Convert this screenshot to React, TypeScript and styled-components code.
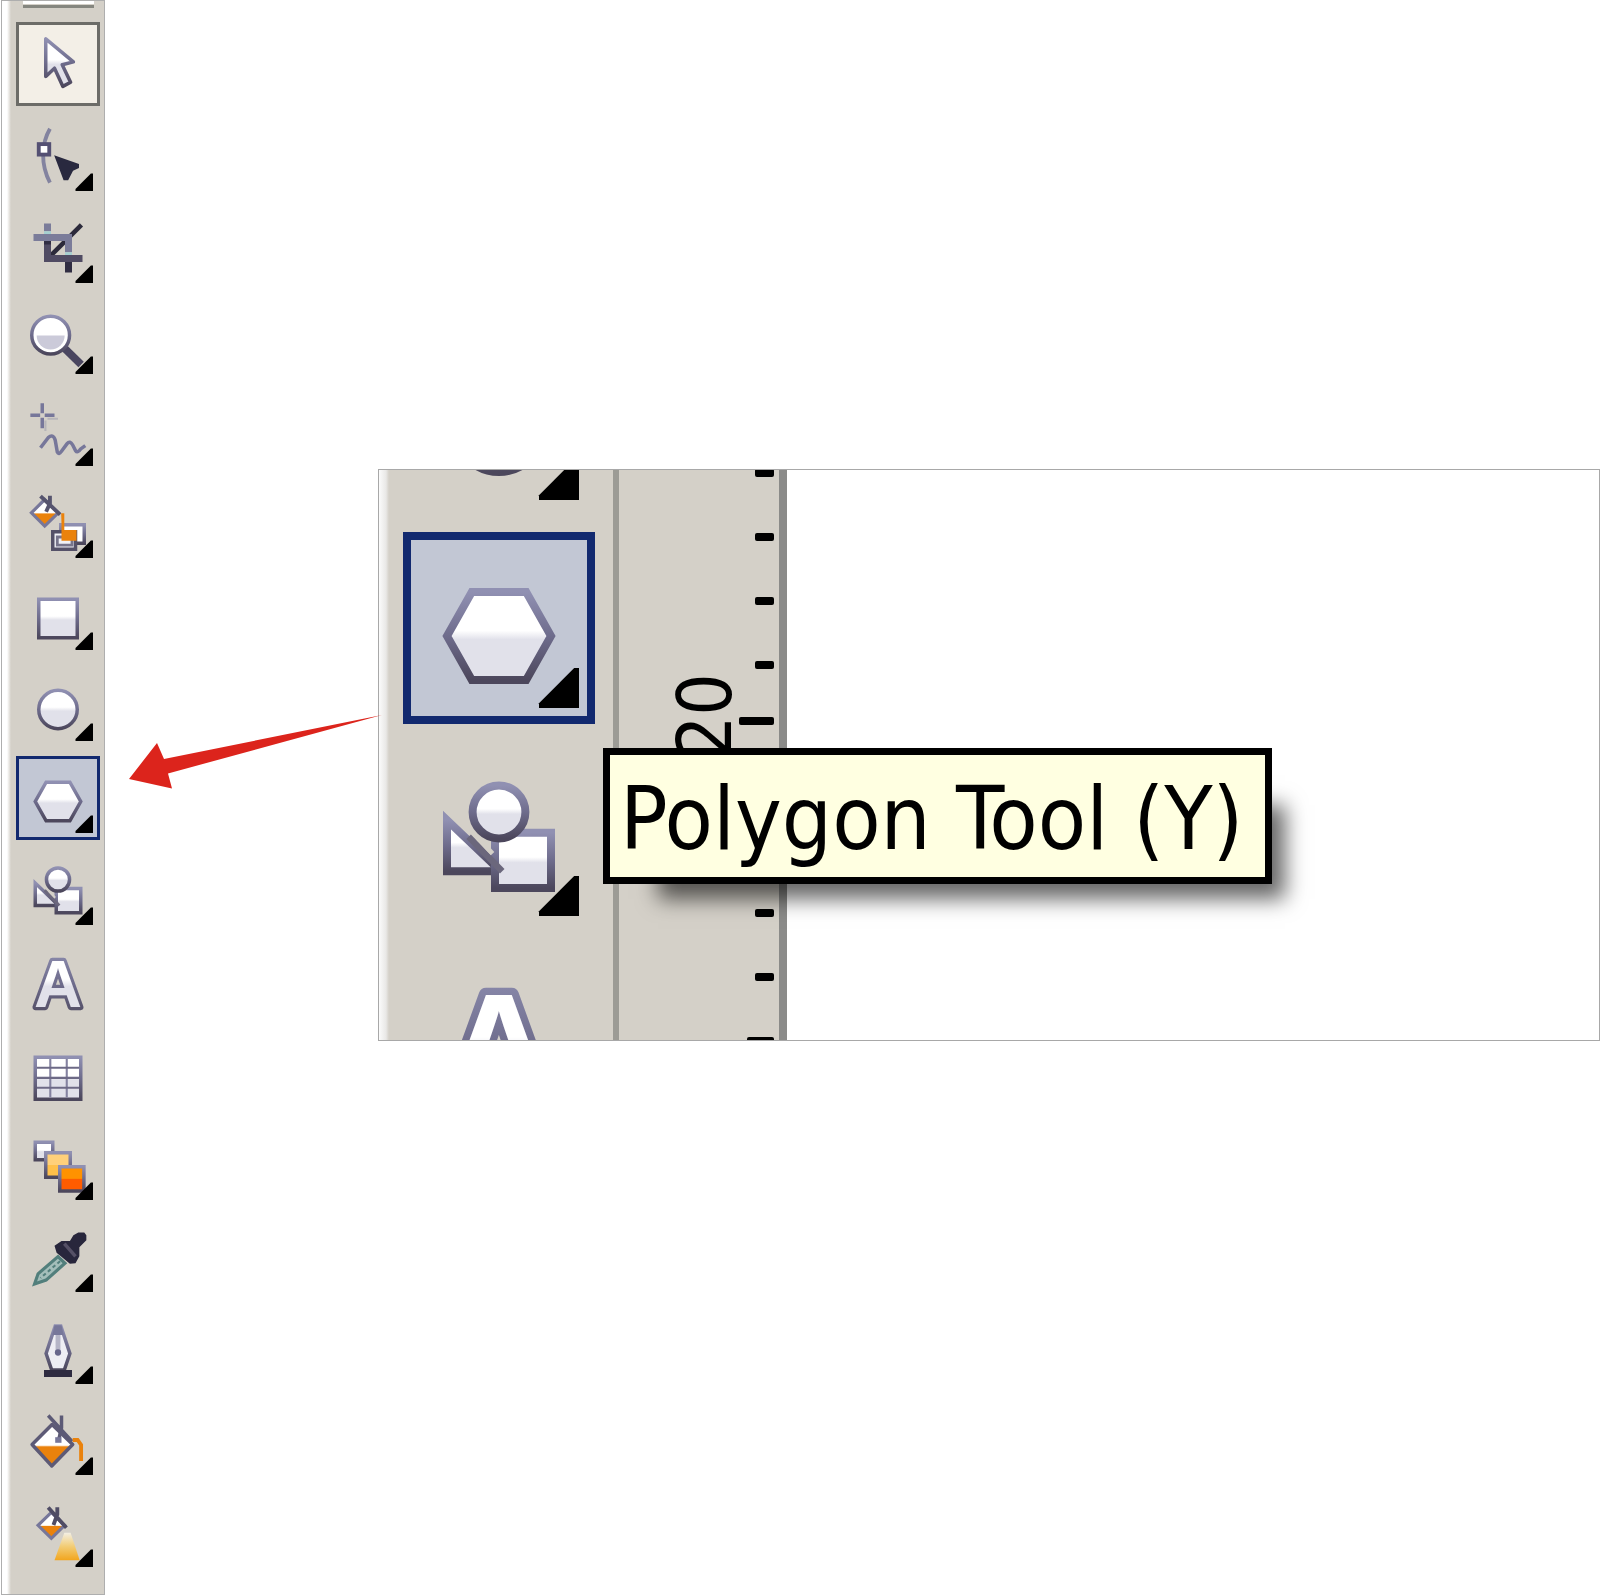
import React from "react";
import styled, { createGlobalStyle } from "styled-components";

const GlobalStyle = createGlobalStyle`
  *, *::before, *::after { box-sizing: border-box; }
  body {
    margin: 0;
    background: #fff;
    font-family: "DejaVu Sans Condensed", "DejaVu Sans", sans-serif;
  }
`;

const face = "#d4d0c8";
const uiFont = `"DejaVu Sans Condensed", "DejaVu Sans", sans-serif`;

const Page = styled.main`
  display: flex;
  align-items: flex-start;
  min-height: 100vh;
`;

const Toolbar = styled.nav`
  display: flex;
  flex-direction: column;
  flex: none;
  width: 104px;
  min-height: calc(100vh - 1px);
  margin-left: 1px;
  padding: 0 0 20px 14px;
  border: 1px solid #aeaeae;
  background: linear-gradient(to right, #fff 5px, ${face} 9px);
`;

const Grip = styled.div`
  height: 7px;
  width: 71px;
  margin: 0 0 14px 7px;
  border-top: 3px solid #fff;
  border-bottom: 3px solid #85867f;
`;

const ToolList = styled.div`
  display: flex;
  flex: 1;
  flex-direction: column;
  justify-content: space-between;
`;

type ToolState = "idle" | "hover" | "active";

const stateColors = {
  idle: { edge: "transparent", fill: "transparent" },
  hover: { edge: "#6c6c68", fill: "#f3efe7" },
  active: { edge: "#12296f", fill: "#c2c7d4" },
};

const ToolButton = styled.button<{ $state: ToolState; $size: number }>`
  position: relative;
  display: block;
  flex: none;
  width: ${(p) => p.$size}px;
  height: ${(p) => p.$size}px;
  padding: 0;
  border: 0;
  background: ${(p) => stateColors[p.$state].fill};
  box-shadow: inset 0 0 0 ${(p) => (p.$size > 100 ? 8 : 3)}px ${(p) => stateColors[p.$state].edge};

  svg {
    display: block;
    width: 100%;
    height: 100%;
  }
`;

const Callout = styled.section`
  display: flex;
  align-items: flex-start;
  flex: 1;
  min-width: 0;
  padding: 469px 0 0 24px;
`;

const Arrow = styled.svg`
  position: relative;
  z-index: 1;
  flex: none;
  width: 253px;
  height: 74px;
  margin: 246px -4px 0 0;
`;

const Closeup = styled.div`
  position: relative;
  display: flex;
  flex: 1;
  min-width: 0;
  height: 572px;
  border: 1px solid #a8a8a8;
  background: #fff;
`;

const CloseupTools = styled.div`
  display: flex;
  flex: none;
  flex-direction: column;
  width: 234px;
  padding-left: 24px;
  overflow: hidden;
  background: linear-gradient(to right, #fbfbfb, #e9e8e6 7px, ${face} 10px);
`;

const CloseupStack = styled.div`
  display: grid;
  gap: 16px;
  margin-top: -146px;
`;

const Ruler = styled.div`
  display: flex;
  flex: none;
  justify-content: space-between;
  width: 174px;
  padding: 0 5px 0 54px;
  overflow: hidden;
  border-left: 6px solid #9c9b95;
  border-right: 8px solid #8b8b89;
  background: ${face};
`;

const RulerLabel = styled.span`
  height: 96px;
  margin-top: 203px;
  font: 74px/64px ${uiFont};
  color: #000;
  writing-mode: vertical-rl;
  transform: rotate(180deg);
  text-align: right;
`;

const Ticks = styled.div`
  display: flex;
  flex-direction: column;
  align-items: flex-end;
  margin-top: -1px;
`;

const Tick = styled.i<{ $width: number; $gap: number }>`
  flex: none;
  width: ${(p) => p.$width}px;
  height: 8px;
  margin-bottom: ${(p) => p.$gap}px;
  border-radius: 2px;
  background: #000;
`;

const Tooltip = styled.div`
  position: absolute;
  left: 224px;
  top: 278px;
  height: 136px;
  padding: 0 22px 0 10px;
  border: 7px solid #000;
  background: #ffffe1;
  box-shadow: 34px 36px 20px -21px rgba(0, 0, 0, 0.6);
  font: 88px/128px ${uiFont};
  color: #000;
  white-space: nowrap;
`;

const HiddenDefs = styled.svg`
  position: absolute;
  width: 0;
  height: 0;
`;

const Defs = () => (
  <HiddenDefs aria-hidden="true">
    <defs>
      <linearGradient id="edge" x1="0" y1="0" x2="0" y2="1">
        <stop offset="0" stopColor="#9090b2" />
        <stop offset="0.5" stopColor="#6e6c8c" />
        <stop offset="1" stopColor="#4c475c" />
      </linearGradient>
      <linearGradient id="glaze" x1="0" y1="0" x2="0" y2="1">
        <stop offset="0.44" stopColor="#ffffff" />
        <stop offset="0.54" stopColor="#e1e1ea" />
      </linearGradient>
      <linearGradient id="paint" x1="0" y1="0" x2="0" y2="1">
        <stop offset="0.5" stopColor="#ffffff" />
        <stop offset="0.54" stopColor="#ea820c" />
      </linearGradient>
      <linearGradient id="amber" x1="0" y1="0" x2="0" y2="1">
        <stop offset="0.48" stopColor="#ffd07a" />
        <stop offset="0.52" stopColor="#ffc04a" />
      </linearGradient>
      <linearGradient id="blaze" x1="0" y1="0" x2="0" y2="1">
        <stop offset="0.48" stopColor="#ff9200" />
        <stop offset="0.52" stopColor="#ff5c00" />
      </linearGradient>
      <linearGradient id="beam" x1="0" y1="0" x2="0" y2="1">
        <stop offset="0" stopColor="#f3efe4" />
        <stop offset="0.5" stopColor="#f2cc74" />
        <stop offset="1" stopColor="#f2a51e" />
      </linearGradient>
    </defs>
  </HiddenDefs>
);

const body = { fill: "url(#glaze)", stroke: "url(#edge)", strokeWidth: 1 };

const icons: Record<string, React.ReactNode> = {
  Pick: (
    <path d="M8.5 4.8V15.6L11 13.2L13.4 18.4L15.6 17.2L13.2 12.2L16.4 11.4Z" {...body} strokeLinejoin="round" />
  ),
  Shape: (
    <>
      <path d="M9.7 4.2C7.2 8.5 7 14.5 9.7 19.6" fill="none" stroke="#83839f" strokeWidth="1.1" />
      <rect x="6.5" y="8.6" width="3" height="3" fill="#fff" stroke="#545073" strokeWidth="1.1" />
      <path d="M10.9 11.8L18 14.3V15.4L16.3 16.2L14.9 18.9H13.6Z" fill="#29293f" />
    </>
  ),
  Crop: (
    <>
      <path d="M18.7 5.4L10 14.1" stroke="#2c2a3b" strokeWidth="1.3" />
      <path d="M8 5h2v2.2H8zM5 8h11v5.2h-2V10H5z" fill="#7b7c9a" />
      <path d="M8 7.2h2V8H8zM14 13.2h2v.8h-2z" fill="#a5cfd0" />
      <path d="M8 10h2v4h9v2H8z" fill="#504b63" />
      <path d="M8 10h2v1H8zM14 16h2v3h-2z" fill="#302d42" />
    </>
  ),
  Zoom: (
    <>
      <path d="M14 14.8L18.6 19.3" stroke="#4a4660" strokeWidth="2.2" />
      <circle cx="9.9" cy="10.9" r="5.4" fill="#fff" stroke="url(#edge)" strokeWidth="1" />
      <path d="M5.9 11H13.9A4 4 0 0 1 5.9 11Z" fill="#cbcad9" />
    </>
  ),
  Freehand: (
    <>
      <g stroke="#77779a" strokeWidth="1">
        <path d="M7.5 4.1V6.9M7.5 8.2V11.2M4.1 7.5H6.9M8.2 7.5H11" />
        <path d="M8.4 9V12M9 8.5H12" stroke="#b7b5b9" strokeWidth=".6" />
      </g>
      <path
        d="M7 16.8L9.2 13.9Q10.6 12.7 11.2 14.6L11.8 18Q12.2 18.9 13 17.8L14.6 15.6Q15.4 14.6 16.2 16L17 17.6Q17.6 18.4 18.4 17.2L19.8 16.2"
        fill="none"
        stroke="#77779a"
        strokeWidth="1"
      />
    </>
  ),
  "Smart Fill": (
    <>
      <path d="M12.8 12.5H19.5V17.8H12.8Z" fill="#fff" stroke="url(#edge)" strokeWidth="1" />
      <path d="M10.5 14.5H17V19.5H10.5Z" fill="#f1f1f6" stroke="#555168" strokeWidth="1" />
      <path d="M11.8 16H16V18.3H11.8Z" fill="none" stroke="#77748b" strokeWidth=".8" />
      <path d="M8.2 5.3L12.1 9.1L8.2 12.9L4.4 9.1Z" fill="url(#paint)" stroke="#77779a" strokeWidth=".9" />
      <path d="M7 4.3L12.6 9.6M9.7 4.2V6.4L8.6 8.8" fill="none" stroke="#56546e" strokeWidth="1.1" />
      <path d="M12.9 9.2H13.8V14H17.3V17.1H13V12Z" fill="#ea820c" />
    </>
  ),
  Rectangle: <path d="M6.5 7.5H17.5V18.5H6.5Z" {...body} />,
  Ellipse: <circle cx="12" cy="13" r="5.5" {...body} />,
  Polygon: <path d="M8.6 7.5H15.4L18.5 13L15.4 18.5H8.6L5.5 13Z" {...body} />,
  "Basic Shapes": (
    <>
      <path d="M5.5 10V16.4H12.2Z" {...body} />
      <path d="M11.5 11.6H18.5V18.5H11.5Z" {...body} />
      <circle cx="12" cy="9" r="3.3" {...body} />
      <path d="M8.2 12.1L12.4 16.4" stroke="#6b677c" strokeWidth=".8" />
      <path d="M9.4 12.3L11.2 14.2" stroke="#d4d0c8" strokeWidth=".6" />
    </>
  ),
  Text: (
    <text
      x="12"
      y="19"
      textAnchor="middle"
      fontFamily='"Liberation Sans", sans-serif'
      fontWeight="700"
      fontSize="19"
      fill="url(#glaze)"
      stroke="url(#edge)"
      strokeWidth="1.8"
      strokeLinejoin="round"
      paintOrder="stroke"
    >
      A
    </text>
  ),
  Table: (
    <>
      <path d="M5.5 7.5H18.5V19.5H5.5Z" {...body} />
      <path d="M9.8 8V19M14.5 8V19" stroke="#8482a0" strokeWidth=".6" />
      <path d="M6 10.5H18M6 13.4H18M6 16.2H18" stroke="#6d6a86" strokeWidth=".6" />
    </>
  ),
  Blend: (
    <>
      <path d="M5.5 5.5H10.5V10.5H5.5Z" {...body} />
      <path d="M8.5 8.5H15.5V15.5H8.5Z" fill="url(#amber)" stroke="url(#edge)" />
      <path d="M12.5 12.5H19.4V19.4H12.5Z" fill="url(#blaze)" stroke="url(#edge)" />
    </>
  ),
  Eyedropper: (
    <>
      <path d="M12 11.9L14 13.8L8.6 18.6L5.3 19.7L6.3 16.8Z" fill="#a3beba" stroke="#527f7c" strokeWidth=".9" />
      <path d="M12.6 13.2L7 18" stroke="#527f7c" strokeWidth=".6" strokeDasharray="1 .8" />
      <path d="M11 8.8L13 7.4L15.4 7.4L16.4 5.8L17.8 5L19.5 5L20.1 5.8V7.2L18.1 9.2V11.8L17 13.8L15.4 13.9L11.6 10.8Z" fill="#28263c" />
      <path d="M13.8 8.2L17 11.8" stroke="#555066" strokeWidth="1" />
    </>
  ),
  Outline: (
    <>
      <path d="M11.2 5.4H12.8L15.4 13.3L13.8 18H10.2L8.6 13.3Z" fill="#eeeef4" stroke="url(#edge)" strokeWidth="1" />
      <path d="M11 5.2H13L13.6 8H10.4Z" fill="#77779a" />
      <path d="M12 8V13" stroke="#b5b5c7" strokeWidth="1.4" />
      <circle cx="12" cy="13" r=".9" fill="#68678c" />
      <path d="M8 18H16V20H8Z" fill="#2e2b40" />
    </>
  ),
  Fill: (
    <>
      <path d="M10.3 7.6L16.2 13.3L10.2 19.4L4.6 13.3Z" fill="url(#paint)" stroke="#5d5a76" strokeWidth="1" strokeLinejoin="round" />
      <path d="M9.2 5L16 12.4M13 5V8.5L12.2 12" fill="none" stroke="#5c5a76" strokeWidth="1" />
      <path d="M11.2 11.2H13V12.8H11.2Z" fill="#77779a" />
      <path d="M16.2 12L17.6 12L18.6 13.4V18" fill="none" stroke="#ea820c" strokeWidth="1.1" />
    </>
  ),
  "Interactive Fill": (
    <>
      <path d="M10.1 6.4L13.9 10.1L10.1 13.8L6.3 10.1Z" fill="url(#paint)" stroke="#77779a" strokeWidth=".9" />
      <path d="M9.2 5L14.4 10.8M11.8 4.9V7L10.7 10" fill="none" stroke="#4f4c65" strokeWidth="1.1" />
      <path d="M13.8 12.2H15.6L18.2 20.1H11Z" fill="url(#beam)" />
    </>
  ),
};

const withoutFlyout = ["Pick", "Text", "Table"];

interface ToolProps {
  name: string;
  state?: ToolState;
  size?: number;
}

const Tool = ({ name, state = "idle", size = 84 }: ToolProps) => (
  <ToolButton type="button" aria-label={`${name} Tool`} $state={state} $size={size}>
    <svg viewBox="0 0 24 24" aria-hidden="true">
      {icons[name]}
      {!withoutFlyout.includes(name) && <path d="M17 22V21.4L21.4 17H22V22Z" fill="#000" />}
    </svg>
  </ToolButton>
);

const stateOf = (name: string): ToolState =>
  name === "Pick" ? "hover" : name === "Polygon" ? "active" : "idle";

const ticks = [
  { width: 19, gap: 56 },
  { width: 19, gap: 56 },
  { width: 19, gap: 56 },
  { width: 19, gap: 48 },
  { width: 35, gap: 56 },
  { width: 19, gap: 56 },
  { width: 19, gap: 56 },
  { width: 19, gap: 56 },
  { width: 19, gap: 56 },
  { width: 27, gap: 56 },
];

export default function App() {
  return (
    <>
      <GlobalStyle />
      <Defs />
      <Page>
        <Toolbar aria-label="Toolbox">
          <Grip />
          <ToolList>
            {Object.keys(icons).map((name) => (
              <Tool key={name} name={name} state={stateOf(name)} />
            ))}
          </ToolList>
        </Toolbar>
        <Callout>
          <Arrow viewBox="0 0 253 74" aria-hidden="true">
            <path d="M0 64L28 28L35 44L253 0L39 58.5L43 73.5Z" fill="#dc241c" />
          </Arrow>
          <Closeup>
            <CloseupTools>
              <CloseupStack>
                {["Ellipse", "Polygon", "Basic Shapes", "Text"].map((name) => (
                  <Tool key={name} name={name} state={stateOf(name)} size={192} />
                ))}
              </CloseupStack>
            </CloseupTools>
            <Ruler>
              <RulerLabel>20</RulerLabel>
              <Ticks>
                {ticks.map((tick, i) => (
                  <Tick key={i} $width={tick.width} $gap={tick.gap} />
                ))}
              </Ticks>
            </Ruler>
            <Tooltip role="tooltip">Polygon Tool (Y)</Tooltip>
          </Closeup>
        </Callout>
      </Page>
    </>
  );
}
